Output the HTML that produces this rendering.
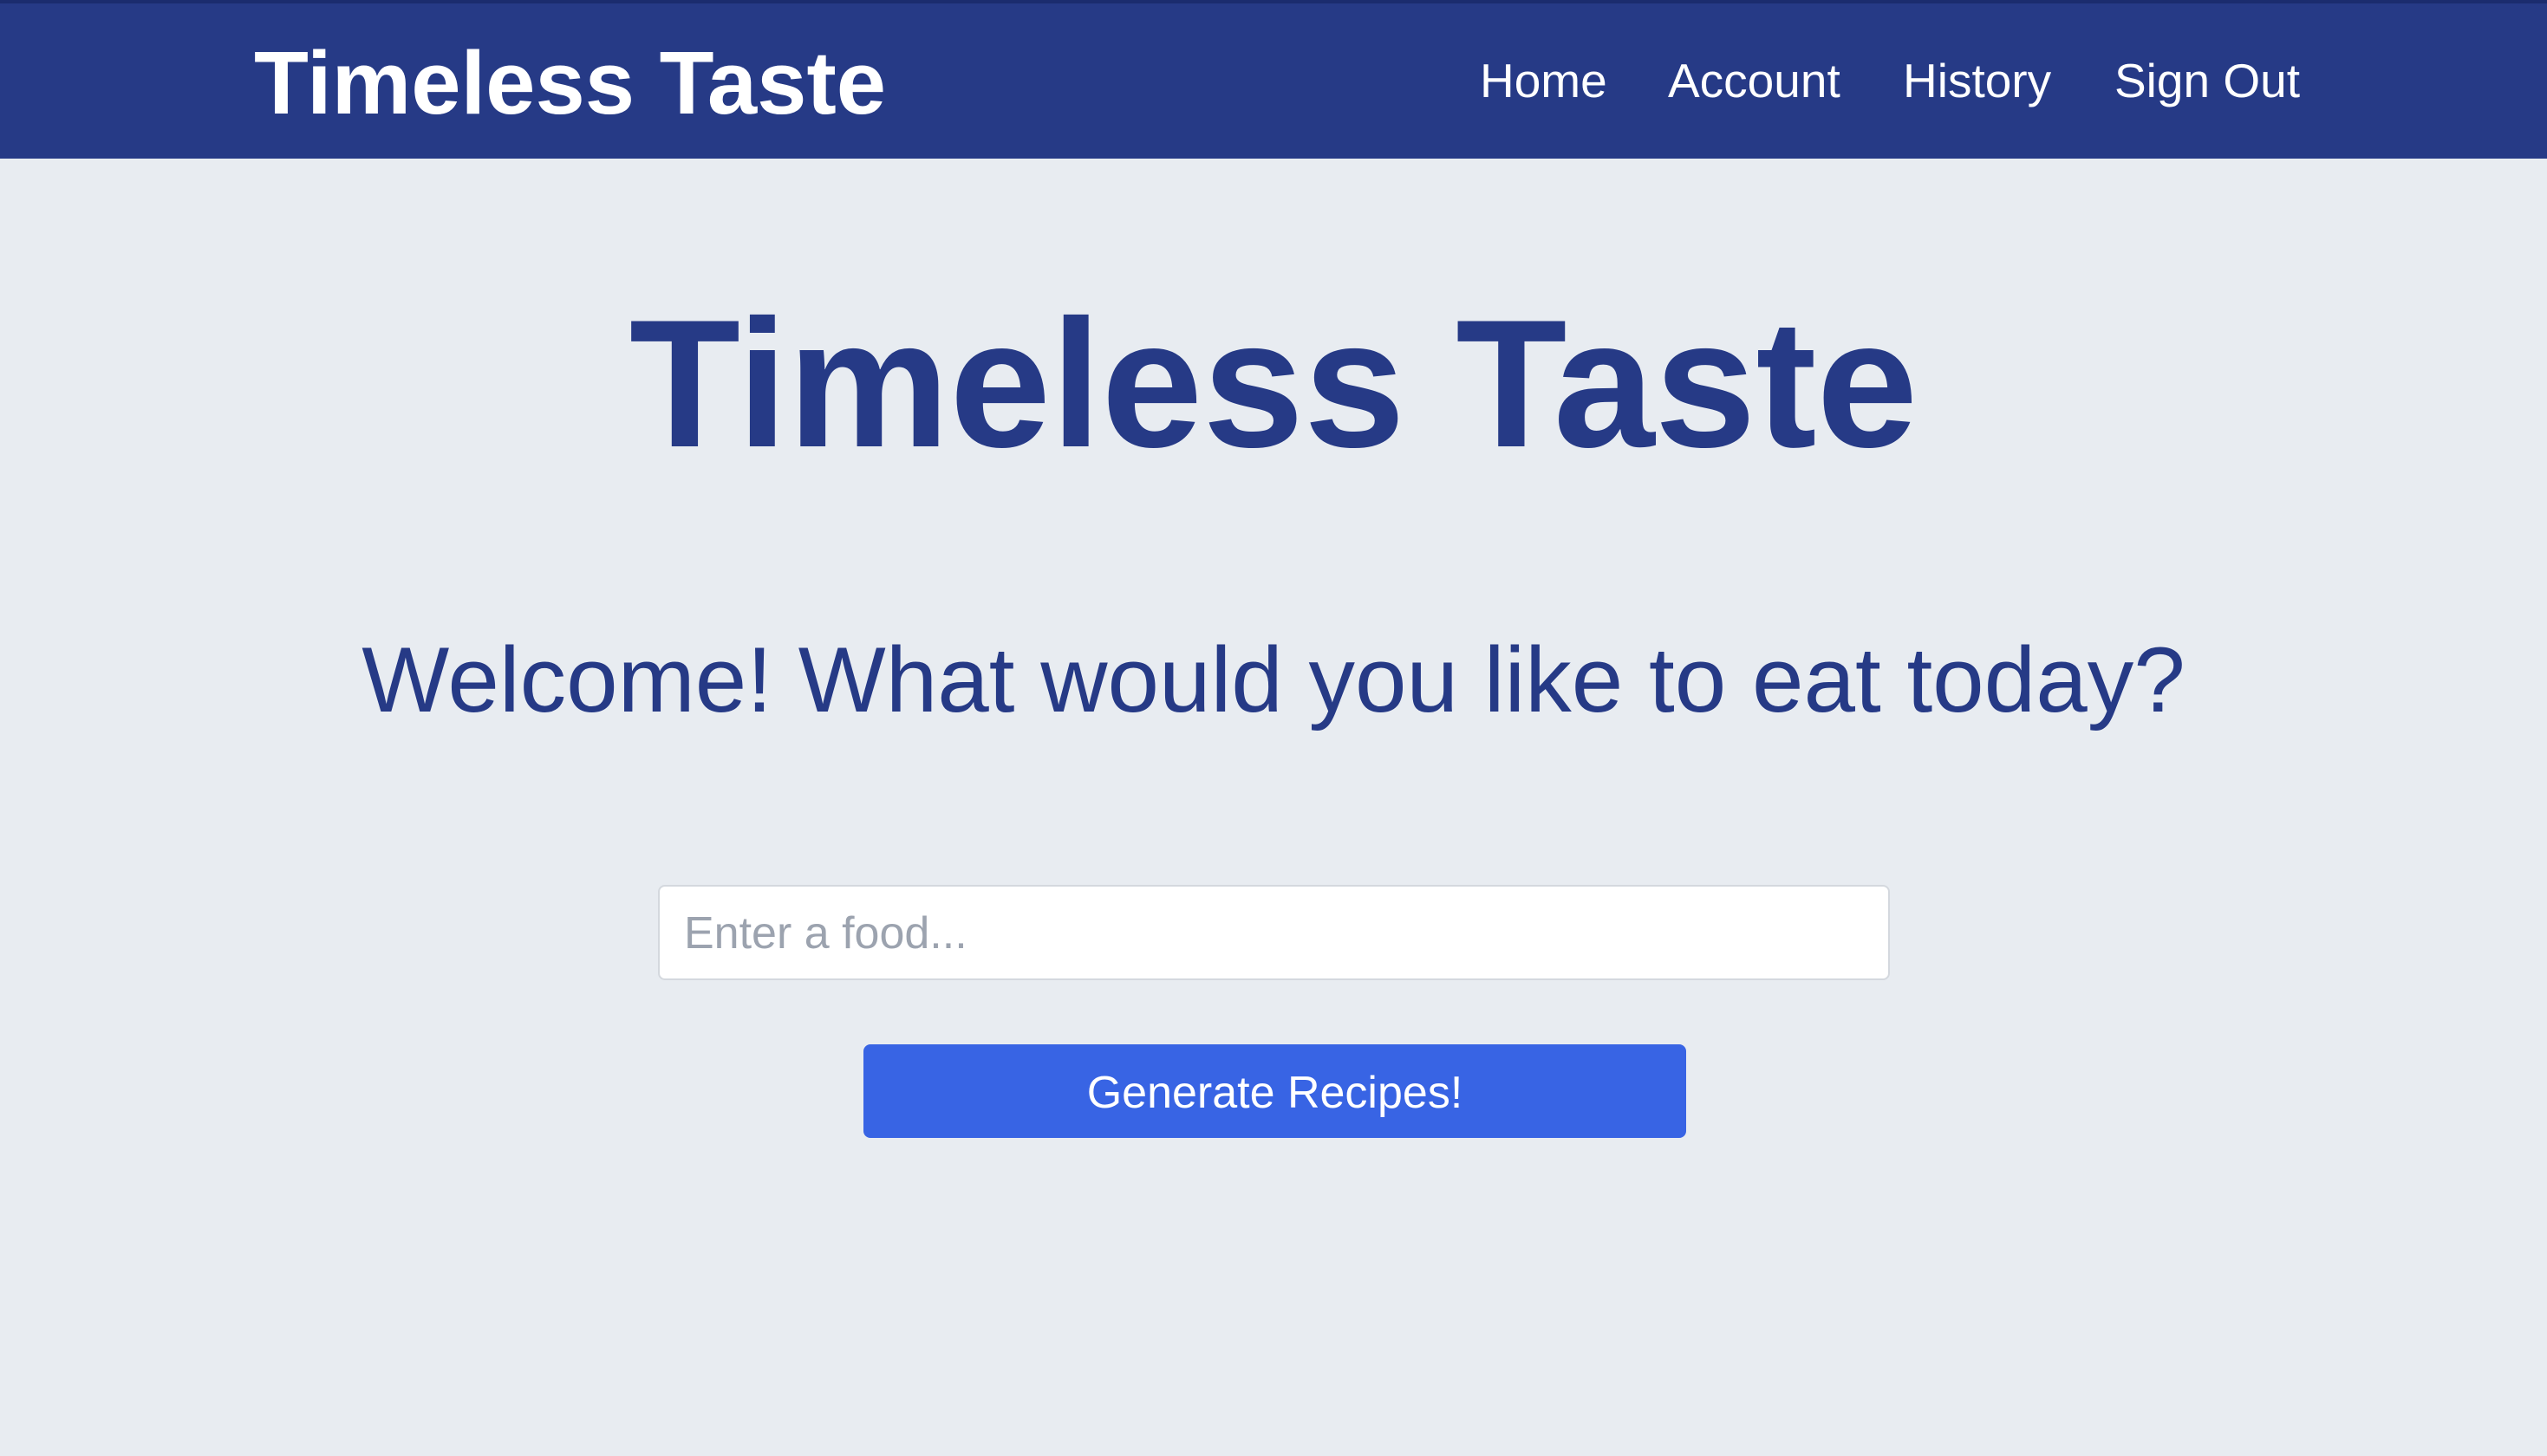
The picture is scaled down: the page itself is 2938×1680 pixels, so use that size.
<!DOCTYPE html>
<html><head><style>
*{margin:0;padding:0;box-sizing:border-box}
body{width:2938px;height:1680px;background:#e8ecf1;font-family:"Liberation Sans",sans-serif;position:relative;overflow:hidden}
.nav{position:absolute;left:0;top:0;width:2938px;height:183px;background:#263a86;border-top:4px solid #1b2c6e}
.logo{position:absolute;left:293px;top:35px;font-size:103px;font-weight:bold;color:#fff;line-height:1.1;white-space:nowrap}
.links{position:absolute;top:59px;font-size:55px;color:#fff;white-space:nowrap;line-height:1.1}
.t{position:absolute;left:0;width:2938px;text-align:center;color:#263a86;white-space:nowrap}
.h1{top:327px;font-size:210px;font-weight:bold;line-height:1.1}
.h2{top:726px;font-size:107px;line-height:1.1}
.inp{position:absolute;left:759px;top:1021px;width:1421px;height:110px;background:#fff;border:2px solid #d4d8de;border-radius:8px}
.ph{position:absolute;left:28px;top:26px;font-size:52px;color:#9ca3af;line-height:1.1}
.btn{position:absolute;left:996px;top:1205px;width:949px;height:108px;background:#3864e4;border-radius:8px;color:#fff;font-size:52px;text-align:center;line-height:112px}
</style></head><body>
<div class="nav">
<div class="logo">Timeless Taste</div>
<div class="links" style="left:1707px">Home</div>
<div class="links" style="left:1924px">Account</div>
<div class="links" style="left:2195px">History</div>
<div class="links" style="left:2439px">Sign Out</div>
</div>
<div class="t h1">Timeless Taste</div>
<div class="t h2">Welcome! What would you like to eat today?</div>
<div class="inp"><div class="ph">Enter a food...</div></div>
<div class="btn">Generate Recipes!</div>
</body></html>
